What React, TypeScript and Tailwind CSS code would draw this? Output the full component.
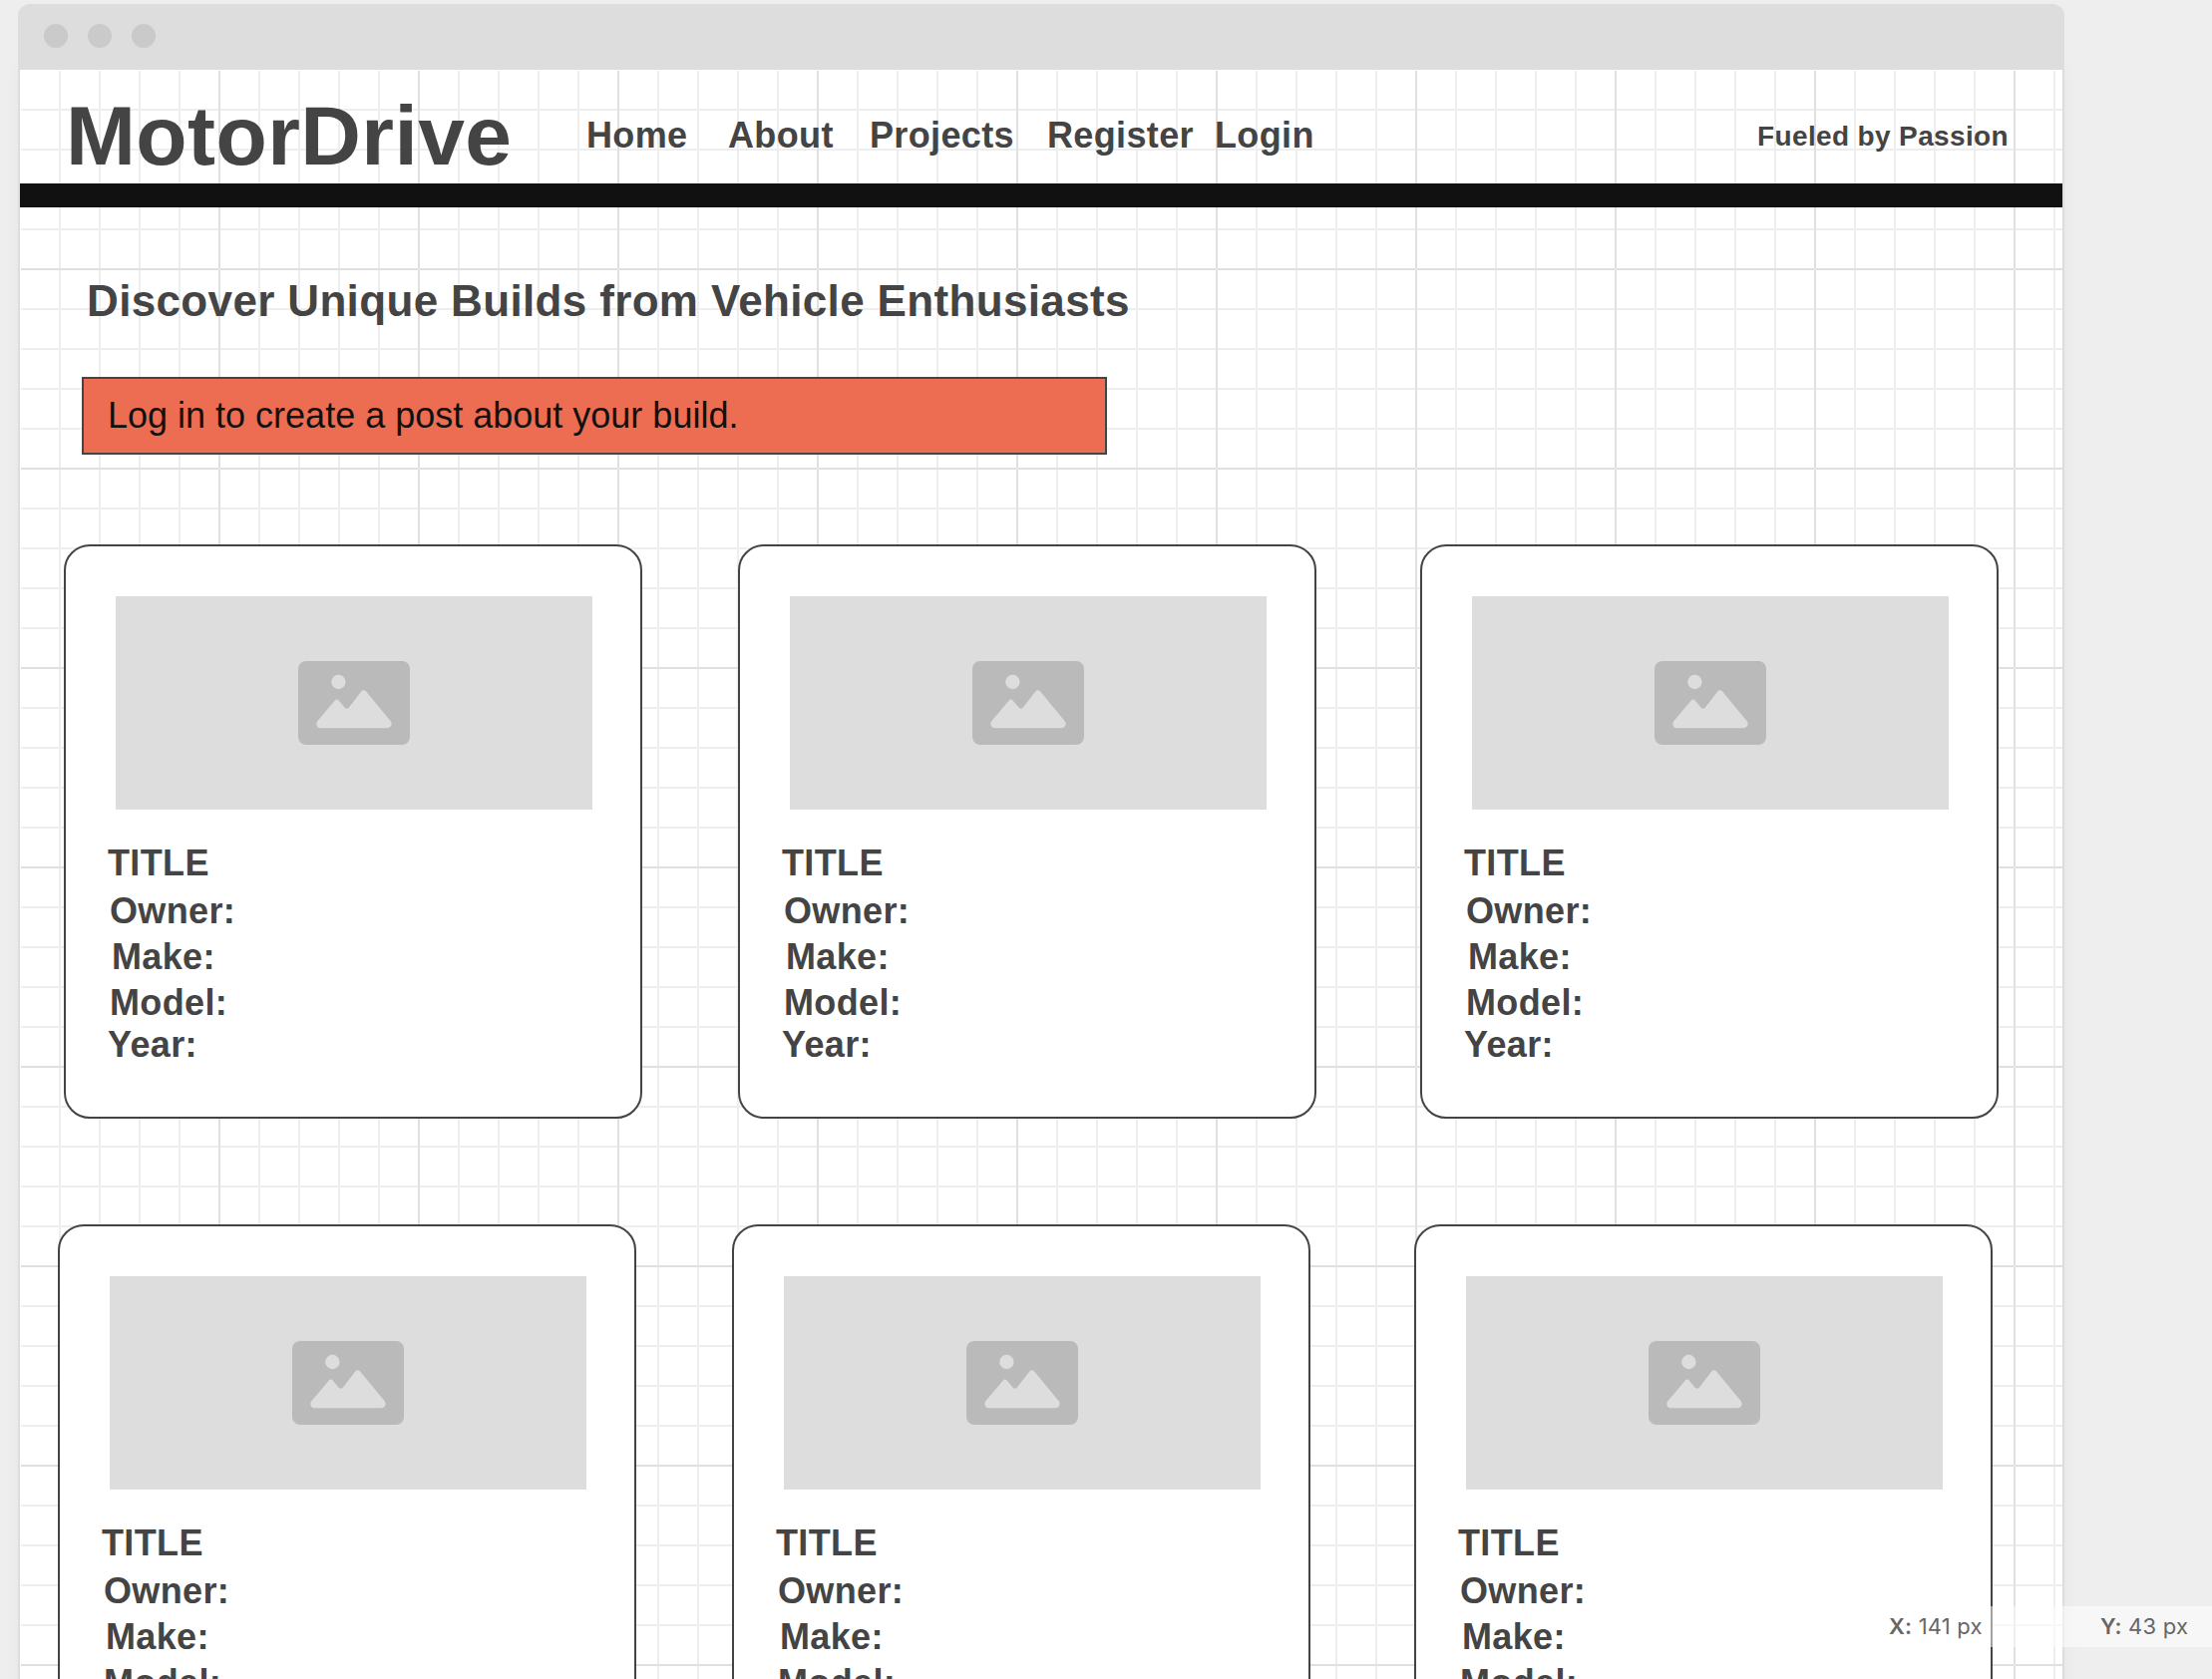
import React from "react";

const NAV = [
  { label: "Home", cls: "w-[142px]" },
  { label: "About", cls: "w-[142px]" },
  { label: "Projects", cls: "w-[178px]" },
  { label: "Register", cls: "w-[168px]" },
  { label: "Login", cls: "w-[120px]" },
];

function PicturePlaceholder() {
  return (
    <div className="ml-[50px] mt-[50px] flex h-[214px] w-[478px] items-center justify-center bg-[#dddddd]">
      <svg width="112" height="84" viewBox="0 0 112 84">
        <rect width="112" height="84" rx="8" fill="#bababa" />
        <circle cx="40.4" cy="21" r="7.2" fill="#dddddd" />
        <path
          d="M19.3 60.2L36.4 39.9Q38.7 37.300 41 39.900L46.700 46.800Q48.700 48.800 50.700 46.800L63.300 30.600Q65.700 27.800 68.100 30.600L92.700 60.300C95 63.300 93 67.300 89.300 67.300H22.700C19 67.300 17 63.300 19.300 60.200Z"
          fill="#dddddd"
        />
      </svg>
    </div>
  );
}

function BuildCard() {
  return (
    <article className="h-[576px] w-[580px] shrink-0 rounded-[26px] border-2 border-[#444444] bg-white text-[36px] font-bold leading-[41px] tracking-[0.36px]">
      <PicturePlaceholder />
      <h3 className="ml-[42px] mt-[33px]">TITLE</h3>
      <p className="ml-[44px] mt-[7px]">Owner:</p>
      <p className="ml-[46px] mt-[5px]">Make:</p>
      <p className="ml-[44px] mt-[5px]">Model:</p>
      <p className="ml-[42px] mt-px">Year:</p>
    </article>
  );
}

function CardRow() {
  return (
    <div className="flex">
      <BuildCard />
      <div className="w-[96px] shrink-0" />
      <BuildCard />
      <div className="w-[104px] shrink-0" />
      <BuildCard />
    </div>
  );
}

export default function App() {
  return (
    <div className="relative h-[1684px] w-[2218px] overflow-hidden bg-[#eeeeee] font-['Liberation_Sans',sans-serif] text-[#444444]">
      <div className="ml-[18px] w-[2052px] pt-[4px]">
        <div className="relative z-10 flex h-[66px] items-center gap-5 rounded-t-[12px] bg-[#dddddd] pb-[2px] pl-[26px]">
          <span className="size-6 rounded-full bg-[#cacaca]" />
          <span className="size-6 rounded-full bg-[#cacaca]" />
          <span className="size-6 rounded-full bg-[#cacaca]" />
        </div>
        <div
          className="h-[1700px] border-x-2 border-[#dddddd] bg-white bg-[conic-gradient(from_270deg_at_1px_1px,#f8f8f8_90deg,transparent_0),linear-gradient(to_bottom,#e0e0e0_2px,transparent_2px),linear-gradient(to_right,#e0e0e0_2px,transparent_2px),linear-gradient(to_bottom,#eeeeee_2px,transparent_2px),linear-gradient(to_right,#eeeeee_2px,transparent_2px)] bg-[size:200px_200px,200px_200px,200px_200px,40px_40px,40px_40px] bg-[position:200px_200px,0_199px,199px_0,0_39px,39px_0] shadow-[0_0_16px_rgba(0,0,0,0.04),inset_1px_1px_0_#ffffff]"
        >
          <header className="flex h-[114px] items-center">
            <h1 className="w-[520px] pl-[46px] pt-[18px] text-[84px] font-bold leading-[94px] tracking-[0.4px]">MotorDrive</h1>
            <nav className="flex flex-1 pl-[48px] pt-[17px] text-[36px] font-bold leading-[41px] tracking-[0.36px]">
              {NAV.map((n) => (
                <a key={n.label} className={n.cls}>{n.label}</a>
              ))}
            </nav>
            <p className="pr-[54px] pt-[20px] text-[28px] font-bold leading-[32px] tracking-[0.36px]">Fueled by Passion</p>
          </header>
          <div className="h-[24px] bg-[#111111]" />
          <h2 className="ml-[67px] mt-[69px] whitespace-nowrap text-[44px] font-bold leading-[50px] tracking-[0.35px]">
            Discover Unique Builds from Vehicle Enthusiasts
          </h2>
          <div className="ml-[62px] mt-[51px] flex h-[78px] w-[1028px] items-center border-2 border-[#444444] bg-[#ed6d52] pb-px pl-[24px] text-[36px] leading-[41px] text-[#111111]">
            Log in to create a post about your build.
          </div>
          <div className="ml-[44px] mt-[90px]">
            <CardRow />
          </div>
          <div className="ml-[38px] mt-[106px]">
            <CardRow />
          </div>
        </div>
      </div>
      <div className="absolute right-0 bottom-[32px] z-20 flex h-[41px] w-[348px] items-center bg-white/50 font-['Inter',sans-serif] text-[22px] tracking-[0.2px] text-[#666666] [font-feature-settings:'calt'_0]">
        <p className="w-[236px] pl-[24px]"><b className="font-semibold">X:</b> 141 px</p>
        <p><b className="font-semibold">Y:</b> 43 px</p>
      </div>
    </div>
  );
}
